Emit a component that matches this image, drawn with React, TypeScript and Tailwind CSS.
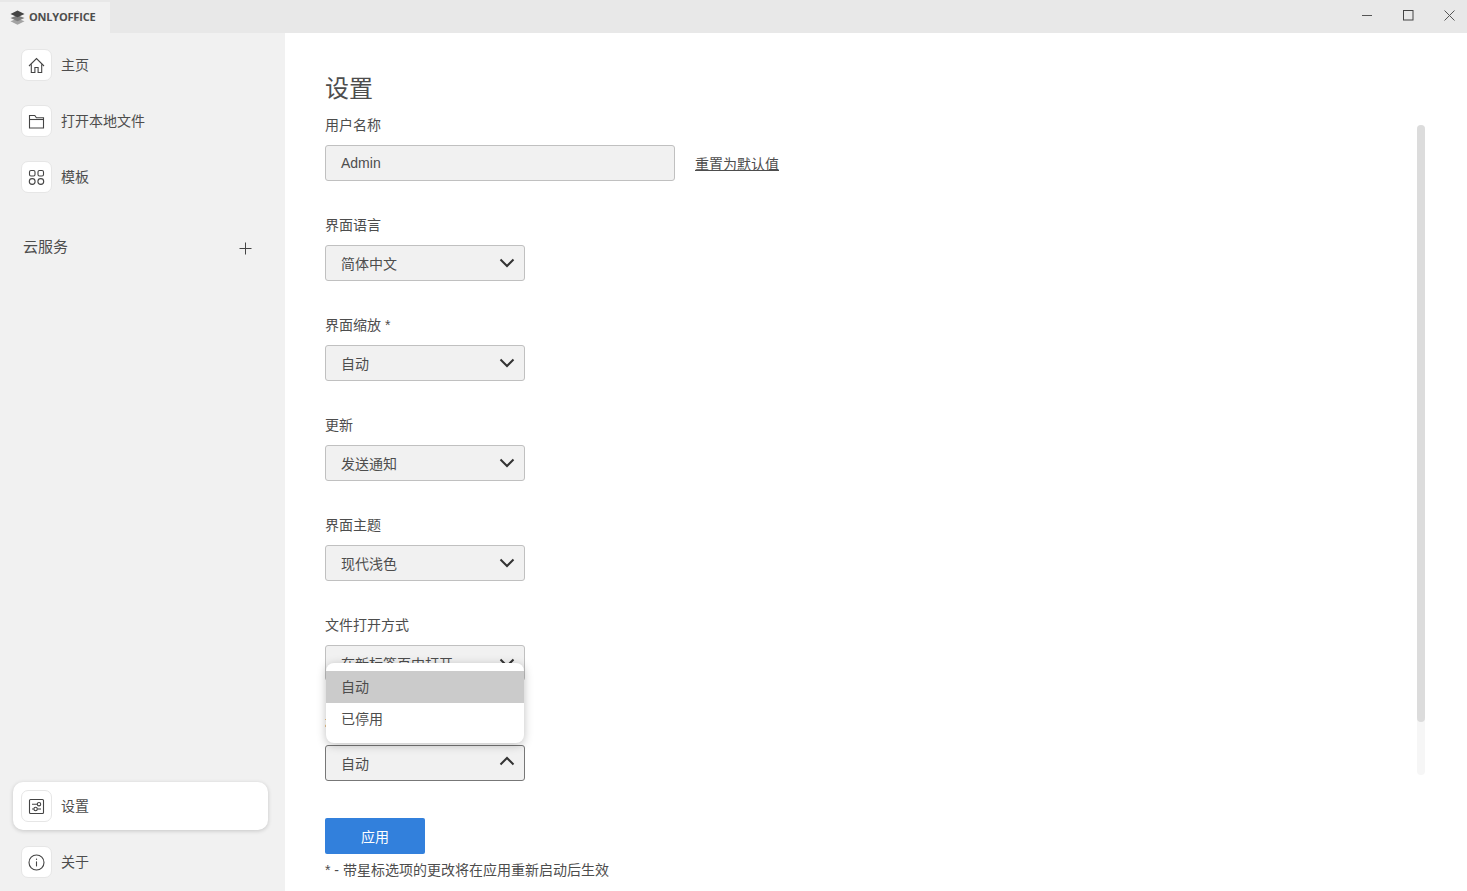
import { ReactNode } from 'react';

const cjk = "font-['Liberation_Sans','Noto_Sans_CJK_SC',sans-serif]";

function Chevron({ up = false }: { up?: boolean }) {
  return (
    <svg className={up ? '-mt-[5px]' : ''} width="16" height="10" viewBox="0 0 16 10" fill="none" stroke="#333" strokeWidth="2">
      <path d={up ? 'M1.5 8.5 8 2l6.5 6.5' : 'M1.5 1.5 8 8l6.5-6.5'} />
    </svg>
  );
}

function Logo() {
  return (
    <svg width="15" height="15" viewBox="0 0 15 15">
      <path d="M7.5 8.6 0.5 11.3l7 3.4 7-3.4z" fill="#a3a3a3" />
      <path d="M7.5 5.2 0.5 8l7 3.3 7-3.3z" fill="#7d7d7d" />
      <path d="M7.5 0.4 0.5 3.9l7 3.4 7-3.4z" fill="#444" />
    </svg>
  );
}

const icons: Record<string, ReactNode> = {
  home: (
    <>
      <path d="M1 9 8.5 1.5 16 9" />
      <path d="M3.3 7.2v8.3h3.6v-5h3.2v5h3.6V7.2" />
    </>
  ),
  folder: (
    <>
      <path d="M1.5 2.5h5.3l1.6 2.2h7.1v10.3h-14z" />
      <path d="M1.5 6.5h14" />
    </>
  ),
  templates: (
    <>
      <rect x="1.5" y="1.5" width="5.5" height="5.5" rx="1.5" />
      <rect x="10" y="1.5" width="5.5" height="5.5" rx="1.5" />
      <circle cx="4.2" cy="12.5" r="2.9" />
      <circle cx="12.8" cy="12.5" r="2.9" />
    </>
  ),
  settings: (
    <>
      <rect x="1.5" y="1.5" width="14" height="14" rx="1" />
      <path d="M4 6.2h5M4 11h1.8" />
      <circle cx="11" cy="6.2" r="1.7" />
      <circle cx="7.6" cy="11" r="1.7" />
      <path d="M9.4 11h3.6" />
    </>
  ),
  about: (
    <>
      <circle cx="8.5" cy="8.5" r="7.5" />
      <path d="M8.5 7.4v5" />
      <path d="M8.5 4.6v1.3" />
    </>
  ),
};

function NavItem({ icon, label, active = false }: { icon: string; label: string; active?: boolean }) {
  return (
    <div
      className={`mx-[13px] flex h-[48px] w-[255px] items-center gap-[9px] rounded-[10px] pl-[8px] ${
        active ? 'bg-white shadow-[0_1px_4px_rgba(0,0,0,0.18)]' : ''
      }`}
    >
      <div className="flex h-[32px] w-[31px] items-center justify-center rounded-[7px] border border-[#e6e6e6] bg-white">
        <svg width="17" height="17" viewBox="0 0 17 17" fill="none" stroke="#444" strokeWidth="1.1">
          {icons[icon]}
        </svg>
      </div>
      <span className="text-[14px] text-[#4d4d4d]">{label}</span>
    </div>
  );
}

function Select({ value, open = false }: { value: string; open?: boolean }) {
  return (
    <div
      className={`flex h-[36px] w-[200px] items-center justify-between rounded-[3px] border bg-[#f1f1f1] pl-[15px] pr-[9px] text-[14px] text-[#4d4d4d] ${
        open ? 'border-[#777]' : 'border-[#c0c0c0]'
      }`}
    >
      <span className="mt-[2px]">{value}</span>
      <Chevron up={open} />
    </div>
  );
}

function Field({ label, children }: { label: string; children: ReactNode }) {
  return (
    <div className="mb-[34px]">
      <div className="mb-[10px] h-[20px] text-[14px] leading-[20px] text-[#4d4d4d]">{label}</div>
      {children}
    </div>
  );
}

export default function App() {
  return (
    <div className={`flex h-screen w-full flex-col overflow-hidden bg-white ${cjk}`}>
      <div className="flex h-[33px] shrink-0 items-stretch justify-between bg-[#e8e8e8]">
        <div className="mt-[2px] flex w-[110px] items-center gap-[4px] bg-[#f1f1f1] pl-[10px]">
          <Logo />
          <span className="font-['Open_Sans',sans-serif] text-[11px] font-bold tracking-[-0.2px] text-[#4d4d4d]">ONLYOFFICE</span>
        </div>
        <div className="flex items-start gap-[30px] pr-[12px] pt-[10px]">
          <svg width="11" height="11" viewBox="0 0 11 11" stroke="#555" fill="none"><path d="M0 5.5h10" /></svg>
          <svg width="11" height="11" viewBox="0 0 11 11" stroke="#444" fill="none"><rect x="0.5" y="0.5" width="9.5" height="9.5" /></svg>
          <svg width="11" height="11" viewBox="0 0 11 11" stroke="#555" fill="none"><path d="M0.5 0.5l10 10M10.5 0.5l-10 10" /></svg>
        </div>
      </div>

      <div className="flex min-h-0 flex-1">
        <aside className="flex w-[285px] shrink-0 flex-col gap-2 bg-[#f1f1f1] pb-[5px] pt-2">
          <NavItem icon="home" label="主页" />
          <NavItem icon="folder" label="打开本地文件" />
          <NavItem icon="templates" label="模板" />
          <div className="mt-[27px] flex items-center justify-between pl-[23px] pr-[33px]">
            <span className="text-[15px] text-[#4d4d4d]">云服务</span>
            <svg className="mt-[3px]" width="13" height="13" viewBox="0 0 13 13" stroke="#444" fill="none">
              <path d="M6.5 0.5v12M0.5 6.5h12" />
            </svg>
          </div>
          <div className="mt-auto flex flex-col gap-2">
            <NavItem icon="settings" label="设置" active />
            <NavItem icon="about" label="关于" />
          </div>
        </aside>

        <main className="relative flex-1 pl-[40px] pt-[40px]">
          <h1 className="mb-[11px] h-[31px] text-[24px] font-normal leading-[31px] text-[#4d4d4d]">设置</h1>
          <Field label="用户名称">
            <div className="flex items-center gap-[20px]">
              <div className="flex h-[36px] w-[350px] items-center rounded-[3px] border border-[#c0c0c0] bg-[#f1f1f1] pl-[15px] text-[14px] text-[#4d4d4d]">
                Admin
              </div>
              <span className="mt-[2px] text-[14px] text-[#4d4d4d] underline">重置为默认值</span>
            </div>
          </Field>
          <Field label="界面语言">
            <Select value="简体中文" />
          </Field>
          <Field label="界面缩放 *">
            <Select value="自动" />
          </Field>
          <Field label="更新">
            <Select value="发送通知" />
          </Field>
          <Field label="界面主题">
            <Select value="现代浅色" />
          </Field>
          <Field label="文件打开方式">
            <Select value="在新标签页中打开" />
          </Field>
          <div className="relative mb-[37px]">
            <div className="mb-[10px] h-[20px] text-[14px] leading-[20px] text-[#4d4d4d]">硬件加速</div>
            <Select value="自动" open />
            <div className="absolute bottom-[38px] left-[1px] z-10 w-[198px] rounded-[8px] bg-white py-[8px] text-[14px] text-[#4d4d4d] shadow-[0_2px_10px_rgba(0,0,0,0.25)]">
              <div className="flex h-[32px] items-center bg-[#cbcbcb] pl-[15px]">自动</div>
              <div className="flex h-[32px] items-center pl-[15px]">已停用</div>
            </div>
          </div>
          <button className="block h-[36px] w-[100px] rounded-[2px] bg-[#3280dc] pt-[2px] text-[14px] text-white">应用</button>
          <p className="mt-[6px] text-[14px] leading-[20px] text-[#4d4d4d]">* - 带星标选项的更改将在应用重新启动后生效</p>

          <div className="absolute right-[42px] top-[92px] h-[650px] w-[8px] rounded-[4px] bg-[#f6f6f6]">
            <div className="h-[597px] rounded-[4px] bg-[#dcdcdc]" />
          </div>
        </main>
      </div>
    </div>
  );
}
